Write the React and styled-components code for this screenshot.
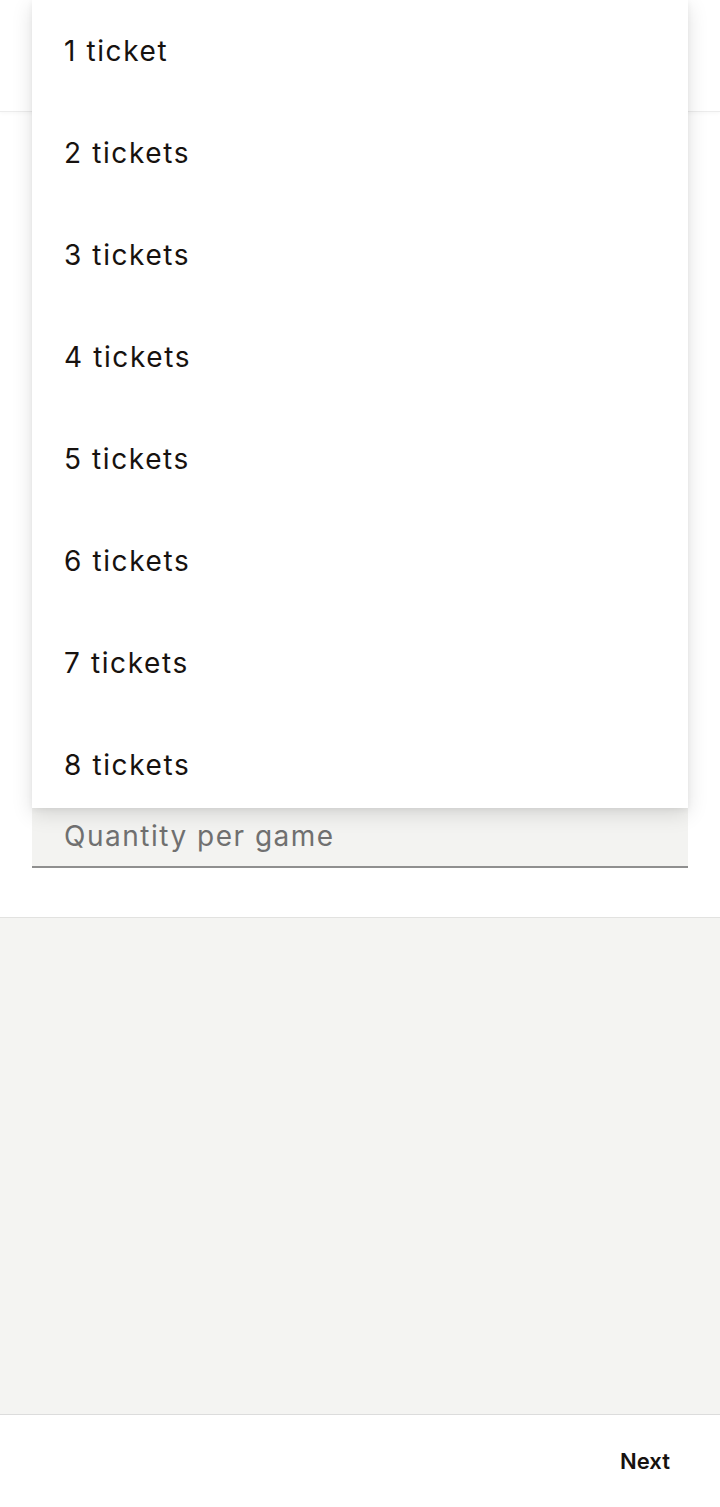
import React from "react";
import styled, { createGlobalStyle } from "styled-components";

const GlobalStyle = createGlobalStyle`
  html, body {
    margin: 0;
    padding: 0;
    background: #ffffff;
    font-family: Inter, "Noto Sans", sans-serif;
    color: #17120f;
  }
  * {
    box-sizing: border-box;
  }
`;

const Page = styled.div`
  position: relative;
  display: flex;
  flex-direction: column;
  min-height: 1507px;
  background: #ffffff;
`;

const Header = styled.div`
  height: 112px;
  background: #ffffff;
  border-bottom: 1px solid #ececec;
  box-shadow: 0 1px 4px rgba(0, 0, 0, 0.04);
`;

const FormSection = styled.div`
  display: flex;
  flex-direction: column;
  justify-content: flex-end;
  height: 806px;
  padding: 0 32px 49px;
  border-bottom: 1px solid #e2e2e0;
`;

const Field = styled.div`
  display: flex;
  align-items: center;
  height: 60px;
  padding: 0 32px 2px;
  background: #f3f3f1;
  border-bottom: 2px solid #8f8f8f;
`;

const Placeholder = styled.span`
  font-size: 28px;
  letter-spacing: 1.5px;
  color: #707070;
`;

const Filler = styled.div`
  flex: 1;
  background: #f4f4f2;
`;

const Footer = styled.div`
  display: flex;
  align-items: center;
  justify-content: flex-end;
  height: 93px;
  padding: 0 50px 0 0;
  background: #ffffff;
  border-top: 1px solid #dcdcdc;
`;

const NextButton = styled.button`
  border: none;
  background: none;
  padding: 0;
  font-family: Inter, "Noto Sans", sans-serif;
  font-size: 22px;
  font-weight: 600;
  color: #17120f;
  cursor: pointer;
`;

const Menu = styled.ul`
  position: absolute;
  top: 0;
  left: 32px;
  width: 656px;
  height: 808px;
  margin: 0;
  padding: 0;
  list-style: none;
  overflow: hidden;
  background: #ffffff;
  box-shadow: 0 6px 20px rgba(0, 0, 0, 0.12), 0 2px 6px rgba(0, 0, 0, 0.06);
`;

const Option = styled.li`
  display: flex;
  align-items: center;
  height: 102px;
  padding: 0 32px 1px;
  font-size: 28px;
  letter-spacing: 1.6px;
  color: #17120f;
  cursor: pointer;
`;

const options = [1, 2, 3, 4, 5, 6, 7, 8];

const App = () => (
  <>
    <GlobalStyle />
    <Page>
      <Header />
      <FormSection>
        <Field>
          <Placeholder>Quantity per game</Placeholder>
        </Field>
      </FormSection>
      <Filler />
      <Footer>
        <NextButton>Next</NextButton>
      </Footer>
      <Menu>
        {options.map(n => (
          <Option key={n}>{n === 1 ? "1 ticket" : `${n} tickets`}</Option>
        ))}
      </Menu>
    </Page>
  </>
);

export default App;
